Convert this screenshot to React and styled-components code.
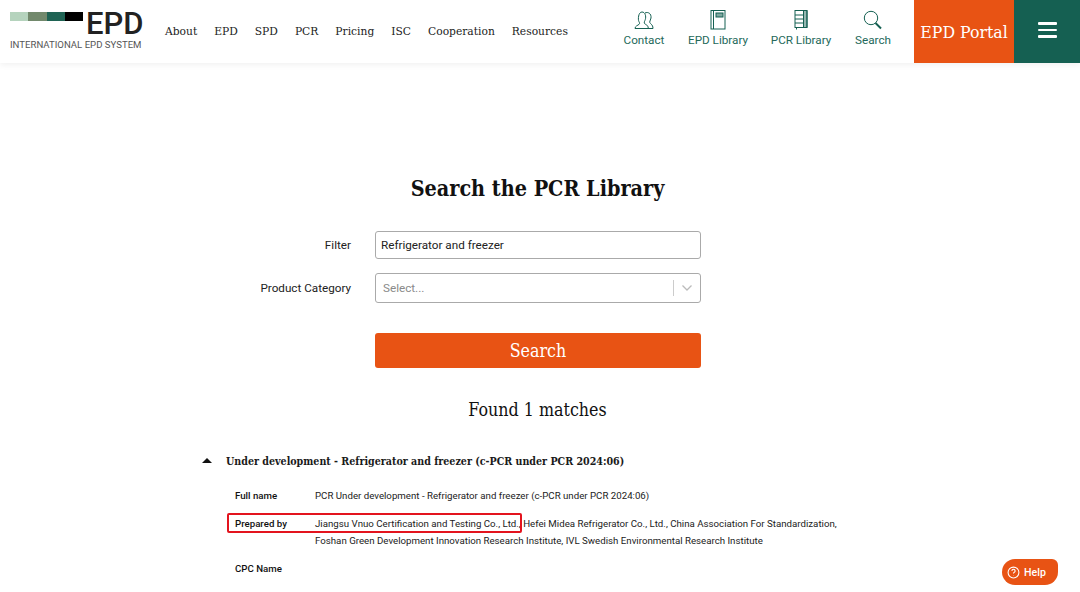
import React from 'react';
import styled, { createGlobalStyle } from 'styled-components';

const SLAB = '"DejaVu Serif Condensed", "DejaVu Serif", "Liberation Serif", serif';
const SANS = 'Roboto, "Liberation Sans", sans-serif';
const GREEN = '#156052';
const ORANGE = '#e85314';

const Global = createGlobalStyle`
  html, body { margin: 0; padding: 0; background: #fff; }
  body { width: 1080px; height: 592px; overflow: hidden; font-family: ${SANS}; color: #1a1a1a; }
`;

const Header = styled.header`
  display: flex; align-items: stretch; height: 63px; background: #fff;
  box-shadow: 0 2px 6px rgba(0,0,0,.06);
`;
const Logo = styled.div`
  width: 165px; padding: 11px 0 0 10px; box-sizing: border-box; flex: none;
`;
const LogoTop = styled.div`display: flex; align-items: flex-start; height: 26px;`;
const Swatch = styled.span`width: 18.25px; height: 9px; background: ${p => p.$c}; flex: none; margin-top: 1px;`;
const LogoMark = styled.span`
  font: 500 31px/25px ${SANS}; color: #222; margin-left: 3px;
`;
const LogoSub = styled.div`font: 400 9.6px/12px ${SANS}; color: #555; margin-top: 2px; white-space: nowrap;`;
const Nav = styled.nav`
  display: flex; align-items: center; gap: 17px; font: 400 11.9px ${SLAB}; color: #222; padding-bottom: 2px;
`;
const Tools = styled.div`display: flex; margin-left: auto; align-items: stretch;`;
const Tool = styled.div`
  width: ${p => p.$w}px; display: flex; flex-direction: column; align-items: center;
  padding-top: 10px; box-sizing: border-box; color: #24695a; font: 400 11.7px/14px ${SANS}; gap: 3px;
  svg { display: block; }
`;
const Spacer = styled.div`width: 10px;`;
const Portal = styled.div`
  width: 100px; background: ${ORANGE}; color: #fff; font: 400 17.5px ${SLAB};
  display: flex; align-items: center; justify-content: center; white-space: nowrap;
`;
const Burger = styled.div`
  width: 66px; background: ${GREEN}; display: flex; flex-direction: column; align-items: center;
  justify-content: center; gap: 4px; padding-bottom: 3px; box-sizing: border-box;
`;
const BurgerBar = styled.span`width: 19px; height: 2.5px; background: #fff; border-radius: 1px;`;

const Main = styled.main`display: flex; flex-direction: column; align-items: center; padding-right: 5px;`;
const Title = styled.h1`font: 700 21.4px/30px ${SLAB}; margin: 111px 0 0; color: #111;`;
const Form = styled.div`
  align-self: flex-start; display: grid; grid-template-columns: 351px 326px; column-gap: 24px; margin-top: 27px;
  align-items: center;
`;
const Label = styled.label`font: 400 11.7px ${SANS}; text-align: right; color: #222;`;
const Input = styled.div`
  height: 28px; box-sizing: border-box; border: 1px solid #aaa; border-radius: 3px;
  padding: 0 5px; font: 400 11.7px/26px ${SANS}; color: #222;
`;
const Select = styled.div`
  height: 30px; box-sizing: border-box; border: 1px solid #aaa; border-radius: 3px; margin-top: 14px;
  display: flex; align-items: center; padding-left: 7px; font: 400 11.7px ${SANS}; color: #8a8a8a;
`;
const SelectLabel = styled(Label)`margin-top: 14px;`;
const SelectText = styled.span`flex: 1;`;
const SelectSep = styled.span`width: 1px; height: 16px; background: #ccc;`;
const SelectArrow = styled.span`width: 26px; display: flex; justify-content: center;`;
const SearchButton = styled.button`
  grid-column: 2; height: 35px; margin-top: 30px; border: 0; border-radius: 3px; background: ${ORANGE};
  color: #fff; font: 400 17.7px ${SLAB}; padding: 0;
`;
const Found = styled.h2`font: 400 17.7px/24px ${SLAB}; margin: 30px 0 0; color: #111;`;

const Results = styled.section`width: 100%; padding: 31px 0 0 202px; box-sizing: border-box;`;
const ResultHead = styled.div`display: flex; align-items: center; gap: 14px; font: 700 10.6px/16px ${SLAB}; color: #1a1a1a;`;
const Caret = styled.span`
  width: 0; height: 0; border-left: 5px solid transparent; border-right: 5px solid transparent;
  border-bottom: 5px solid #111; margin-bottom: 2px;
`;
const Rows = styled.div`padding: 17.5px 0 0 33px;`;
const Row = styled.div`
  display: grid; grid-template-columns: 80px 530px; font: 400 9.7px/17px ${SANS}; color: #222;
  margin-bottom: 11px;
`;
const RowKey = styled.span`font-weight: 500; color: #111;`;
const Marked = styled.span`position: relative;`;
const Highlight = styled.span`
  position: absolute; left: -88px; right: -3px; top: -5px; bottom: -4px;
  border: 2px solid #e3141e; border-radius: 2px;
`;
const Help = styled.div`
  position: absolute; left: 1002px; top: 559px; width: 56px; height: 26px; background: ${ORANGE};
  border-radius: 13px 6px 13px 13px; color: #fff; font: 500 10.6px ${SANS}; padding-left: 5px; box-sizing: border-box;
  display: flex; align-items: center; gap: 4px;
`;

const Contact = () => (
  <svg width="20" height="20" viewBox="0 -1 20 20" fill="none" stroke={GREEN} strokeWidth="1">
    <path d="M1 17.500c0-2.500 2.800-3 4.200-4.300 .7-.8 .3-1.700-.3-2.700C3.800 8.500 4.300 1 8 1c3.300 0 4.300 4.500 3.300 7.500-.4 1.500-1.200 2-1 3.500.2 1 2 1.700 3 2.500 .7 .7 1 1.800 1 3H1z" />
    <path d="M11 2c3-1.500 6.500 .5 6 5-.2 1.500-1.200 2.500-1.300 4 0 1.800 3.300 2.200 3.300 6.500h-5" />
  </svg>
);
const EpdBook = () => (
  <svg width="16" height="20" viewBox="0 0 16 20" fill="none" stroke={GREEN} strokeWidth="1">
    <rect x="1" y="0.500" width="14" height="18.500" />
    <path d="M3.500 .5v18.500" />
    <rect x="6" y="3" width="7" height="4" fill={GREEN} fillOpacity=".55" />
  </svg>
);
const PcrBook = () => (
  <svg width="14" height="20" viewBox="0 0 14 20" fill="none" stroke={GREEN} strokeWidth="1">
    <rect x="1" y="0.500" width="12" height="17" />
    <path d="M9.500 .5v17M1 5h8.500M1 9h8.500M1 13h8.500" />
    <path d="M9.500 .5h3.500v17H9.500z" fill={GREEN} fillOpacity=".45" />
    <path d="M2.500 18v1.500" />
  </svg>
);
const Lens = () => (
  <svg width="20" height="20" viewBox="0 0 20 20" fill="none" stroke={GREEN}>
    <circle cx="8" cy="8" r="6.700" strokeWidth="1" />
    <path d="M12.500 13l5.500 5.500" strokeWidth="2" />
  </svg>
);

export default function App() {
  return (
    <>
      <Global />
      <Header>
        <Logo>
          <LogoTop>
            <Swatch $c="#b5d3bd" /><Swatch $c="#72896c" /><Swatch $c="#1f6354" /><Swatch $c="#000" />
            <LogoMark>EPD</LogoMark>
          </LogoTop>
          <LogoSub>INTERNATIONAL EPD SYSTEM</LogoSub>
        </Logo>
        <Nav>
          <span>About</span><span>EPD</span><span>SPD</span><span>PCR</span><span>Pricing</span>
          <span>ISC</span><span>Cooperation</span><span>Resources</span>
        </Nav>
        <Tools>
          <Tool $w={64}><Contact />Contact</Tool>
          <Tool $w={84}><EpdBook />EPD Library</Tool>
          <Tool $w={82}><PcrBook />PCR Library</Tool>
          <Tool $w={62}><Lens />Search</Tool>
          <Spacer />
          <Portal>EPD Portal</Portal>
          <Burger><BurgerBar /><BurgerBar /><BurgerBar /></Burger>
        </Tools>
      </Header>
      <Main>
        <Title>Search the PCR Library</Title>
        <Form>
          <Label>Filter</Label>
          <Input>Refrigerator and freezer</Input>
          <SelectLabel>Product Category</SelectLabel>
          <Select>
            <SelectText>Select...</SelectText>
            <SelectSep />
            <SelectArrow>
              <svg width="12" height="8" viewBox="0 0 12 8" fill="none" stroke="#bbb" strokeWidth="1.300"><path d="M1.500 1.500 6 6l4.500-4.500" /></svg>
            </SelectArrow>
          </Select>
          <SearchButton>Search</SearchButton>
        </Form>
        <Found>Found 1 matches</Found>
        <Results>
          <ResultHead><Caret />Under development - Refrigerator and freezer (c-PCR under PCR 2024:06)</ResultHead>
          <Rows>
            <Row>
              <RowKey>Full name</RowKey>
              <span>PCR Under development - Refrigerator and freezer (c-PCR under PCR 2024:06)</span>
            </Row>
            <Row>
              <RowKey>Prepared by</RowKey>
              <span>
                <Marked>Jiangsu Vnuo Certification and Testing Co., Ltd.<Highlight /></Marked>, Hefei Midea Refrigerator Co., Ltd., China Association For Standardization, Foshan Green Development Innovation Research Institute, IVL Swedish Environmental Research Institute
              </span>
            </Row>
            <Row><RowKey>CPC Name</RowKey><span /></Row>
          </Rows>
        </Results>
      </Main>
      <Help>
        <svg width="13" height="13" viewBox="0 0 24 24" fill="none" stroke="#fff" strokeWidth="2"><circle cx="12" cy="12" r="10" /><path d="M9 9a3 3 0 1 1 4.500 2.600c-1 .6-1.500 1.200-1.500 2.400M12 17.500v.5" /></svg>
        Help
      </Help>
    </>
  );
}
